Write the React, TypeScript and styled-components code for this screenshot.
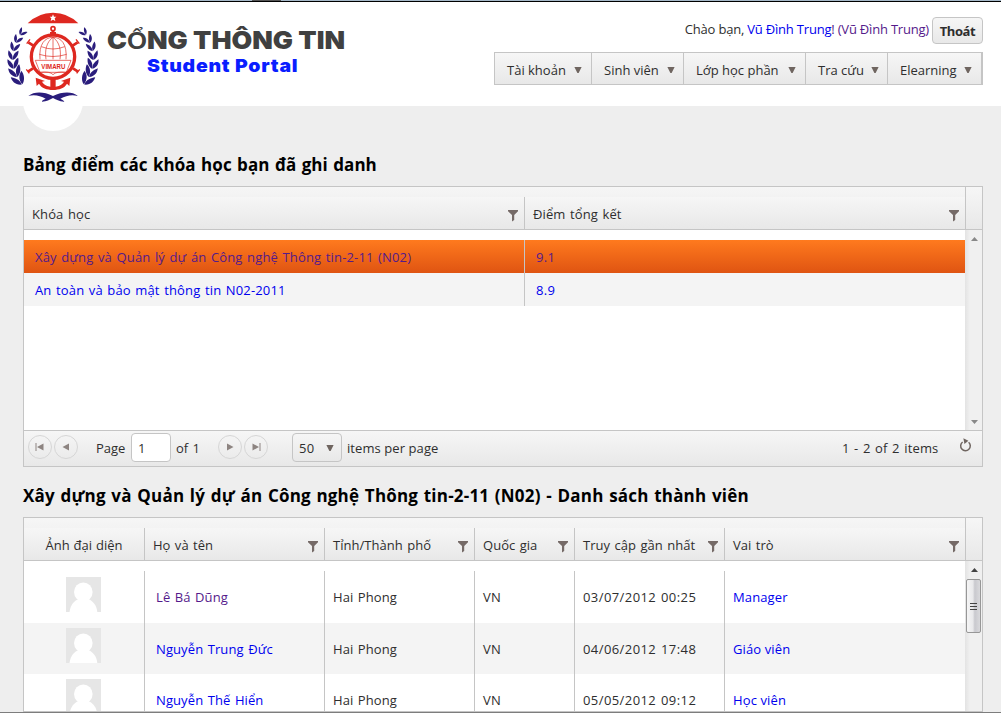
import React from "react";
import styled, { createGlobalStyle } from "styled-components";

const LINE = "#c5c5c5";
const BAR = "linear-gradient(#f6f6f6, #e8e8e8)";

const Global = createGlobalStyle`
  * { box-sizing: border-box; }
  html, body { margin: 0; padding: 0; }
  body {
    width: 1001px; height: 713px; overflow: hidden;
    background: #eeeeee; color: #2e2e2e;
    font: 13px/20px "Open Sans", "Noto Sans", sans-serif;
  }
`;

const Page = styled.div`
  width: 1001px; height: 713px; overflow: hidden;
  display: flex; flex-direction: column;
`;
const Strip = styled.div`
  height: 2px; flex: none; border-bottom: 1px solid #000;
  background: linear-gradient(90deg, #a5b8c8 252px, #555 252px, #555 281px, #a5b8c8 281px);
`;
const Header = styled.header`
  height: 104px; flex: none; background: #fff; position: relative;
  display: flex; justify-content: space-between; padding: 6px 18px 0 4px;
`;
const Bump = styled.div`
  position: absolute; left: 23px; top: 69px; width: 60px; height: 60px;
  border-radius: 50%; background: #fff;
`;
const Brand = styled.div`display: flex; position: relative;`;
const Titles = styled.div`
  margin-left: 3px; padding-top: 17px;
  font-family: Inter, sans-serif; font-weight: 900;
`;
const Title = styled.div`
  width: max-content; font-size: 25px; line-height: 30px; color: #404040; white-space: nowrap;
  transform: scaleX(1.07); transform-origin: left;
`;
const Regular = styled.span`
  font: 700 24px/20px "Liberation Sans", sans-serif;
`;
const Subtitle = styled.div`
  width: max-content; margin-left: 40px; font-size: 18px; line-height: 22px; color: #0a1eff;
  white-space: nowrap; letter-spacing: 0.7px; transform: scaleX(1.08); transform-origin: left;
`;
const Side = styled.div`display: flex; flex-direction: column; align-items: flex-end;`;
const Greeting = styled.div`display: flex; height: 36px; padding-top: 9px;`;
const Text = styled.span<{ $ls?: number; $ws?: number; $c?: string }>`
  white-space: pre; letter-spacing: ${(p) => p.$ls ?? 0}px; word-spacing: ${(p) => p.$ws ?? 0}px;
  color: ${(p) => p.$c ?? "inherit"};
`;
const Hello = styled.div`margin: 2px 3px 0 0; white-space: pre;`;
const Logout = styled.button`
  width: 51px; height: 27px; padding: 0; border: 1px solid ${LINE}; border-radius: 4px;
  background: ${BAR}; color: #2e2e2e; font: bold 13px/27px "Open Sans", sans-serif; letter-spacing: -0.4px;
`;
const Nav = styled.nav`
  display: flex; height: 33px; margin-top: 8px; border: 1px solid ${LINE}; background: ${BAR};
`;
const NavItem = styled.div<{ $w: number; $r: number }>`
  width: ${(p) => p.$w}px; border-right: 1px solid ${LINE};
  display: flex; align-items: center; justify-content: space-between; padding: 3px ${(p) => p.$r}px 0 12px;
`;
const Heading = styled.h2<{ $h: number; $ls: number }>`
  margin: 0; height: ${(p) => p.$h}px; flex: none; display: flex; align-items: flex-end;
  padding: 0 0 9px 23px; font-size: 17px; line-height: 24px; font-weight: 700; color: #000;
  white-space: pre; letter-spacing: ${(p) => p.$ls}px; word-spacing: 1px;
`;
const Grid = styled.section<{ $h: number }>`
  width: 960px; height: ${(p) => p.$h}px; margin-left: 23px; flex: none; overflow: hidden;
  border: 1px solid ${LINE}; background: #fff; display: flex; flex-direction: column;
`;
const HeadBar = styled.div`
  height: 43px; flex: none; display: flex; border-bottom: 1px solid ${LINE}; background: ${BAR};
`;
const HeadRow = styled.div`
  width: 941px; height: 32px; margin-top: 10px; display: flex; background: ${BAR};
`;
const HeadGap = styled.div`width: 1px; background: ${LINE};`;
const HeadCell = styled.div<{ $w: number; $last?: boolean; $center?: boolean }>`
  width: ${(p) => p.$w}px; padding: 2px 5px 0 ${(p) => (p.$center ? 5 : 8)}px;
  border-right: ${(p) => (p.$last ? "0" : `1px solid ${LINE}`)};
  display: flex; align-items: center; justify-content: ${(p) => (p.$center ? "center" : "space-between")};
`;
const FunnelIcon = styled.svg`margin-top: 4px;`;
const Body = styled.div`flex: 1; min-height: 0; display: flex;`;
const Rows = styled.div`width: 941px; padding-top: 10px; display: flex; flex-direction: column;`;
const Row = styled.div<{ $h: number; $kind?: "on" | "alt" }>`
  height: ${(p) => p.$h}px; flex: none; display: flex;
  background: ${(p) =>
    p.$kind === "on" ? "linear-gradient(#ff7a1e, #df5412)" : p.$kind === "alt" ? "#f4f4f4" : "#fff"};
`;
const Cell = styled.div<{ $w: number; $last?: boolean; $pad?: number; $top?: number }>`
  width: ${(p) => p.$w}px; padding: ${(p) => p.$top ?? 1}px 0 0 ${(p) => p.$pad ?? 8}px;
  border-right: ${(p) => (p.$last ? "0" : `1px solid ${LINE}`)};
  display: flex; align-items: center;
`;
const PhotoCell = styled.div<{ $top: number }>`
  width: 121px; padding: ${(p) => p.$top}px 0 0 42px; border-right: 1px solid ${LINE};
`;
const Scroll = styled.div`
  width: 17px; background: linear-gradient(90deg, #e3e3e3, #f0f0f0 5px, #f0f0f0);
  display: flex; flex-direction: column; align-items: center; justify-content: space-between; padding: 7px 0 6px;
`;
const ArrowIcon = styled.svg`margin-left: 2px; flex: none;`;
const Thumb = styled.div`
  width: 15px; height: 54px; margin: 7px 0 auto; border: 1px solid #979797; border-radius: 2px;
  background: linear-gradient(90deg, #f5f5f5, #e9e9eb 45%, #c9c9ce 60%, #d9d9dc);
  display: flex; flex: none; flex-direction: column; gap: 2px; align-items: center; justify-content: center;
`;
const Grip = styled.i`width: 7px; height: 1px; background: #444;`;
const Pager = styled.div`
  height: 36px; flex: none; border-top: 1px solid ${LINE}; background: ${BAR};
  display: flex; padding: 2px 10px 0 4px;
`;
const Round = styled.div<{ $gap?: number }>`
  width: 24px; height: 24px; margin: 2px ${(p) => p.$gap ?? 2}px 0 0; border: 1px solid #d6d6d6;
  border-radius: 50%; display: flex; align-items: center; justify-content: center;
`;
const Label = styled.div<{ $w: number }>`width: ${(p) => p.$w}px; padding-top: 5px; white-space: nowrap;`;
const Box = styled.div<{ $w: number; $fill?: string }>`
  width: ${(p) => p.$w}px; height: 29px; padding: 0 7px 0 6px; border: 1px solid ${LINE}; border-radius: 4px;
  background: ${(p) => p.$fill ?? BAR}; display: flex; align-items: center; justify-content: space-between;
  margin-right: 5px;
`;
const Push = styled.div`flex: 1;`;
const Bottom = styled.div`height: 1px; flex: none; background: #7d7d7d;`;

const Down = () => (
  <svg width="8" height="8" viewBox="0 0 8 8"><path d="M0.4 1h7.2L4.6 7h-1.2z" fill="#6f6560" /></svg>
);
const Funnel = () => (
  <FunnelIcon width="12" height="14" viewBox="0 0 12 14">
    <path d="M1 1h10v1.2L7.2 6v5L5 12.4V6L1 2.2z" fill="#756a67" />
  </FunnelIcon>
);
const ScrollArrow = ({ down, dark }: { down?: boolean; dark?: boolean }) => (
  <ArrowIcon width="7" height="4" viewBox="0 0 7 4">
    <path d={down ? "M0 0h7L3.5 4z" : "M0 4h7L3.5 0z"} fill={dark ? "#444" : "#888"} />
  </ArrowIcon>
);
const Step = ({ d }: { d: string }) => (
  <svg width="10" height="10" viewBox="0 0 10 10"><path d={d} fill="#8d8481" /></svg>
);
const Avatar = () => (
  <svg width="35" height="35" viewBox="0 0 35 35" display="block">
    <rect width="35" height="35" fill="#e6e6e6" />
    <ellipse cx="17.3" cy="15" rx="9.3" ry="9.6" fill="#fff" />
    <path d="M3.5 35C4.5 27 9 23.5 12.5 22h9.8C27 24 30.5 28 31.3 35z" fill="#fff" />
  </svg>
);

const leafAngles = [-40, -28, -16, -4, 8, 20, 32];
const Laurel = () => (
  <g fill="#2a1d7c">
    {leafAngles.map((a, i) => (
      <g key={a} transform={`rotate(${-a} 147 150) translate(27 150) scale(${0.75 + i * 0.09})`}>
        <path d="M-1 14C-14 8-17-4-14-14C-7-7 1 0-1 14z" />
        <path d="M0 14C-2-1 6-10 15-14C16-3 11 9 0 14z" />
      </g>
    ))}
  </g>
);
const Logo = () => (
  <svg width="100" height="98" viewBox="0 0 300 294">
    <path d="M71 46Q102 14 147 14T223 46z" fill="#de2820" />
    <path d="M147 19l3 7h7l-5 5 2 8-7-4-7 4 2-8-5-5h7z" fill="#fff" />
    <Laurel />
    <g transform="translate(294 0) scale(-1 1)"><Laurel /></g>
    <path d="M73 264C91 250 119 251 147 264C175 251 204 250 222 264C202 259 187 263 169 272C177 276 183 280 180 281C165 280 157 275 147 270C137 275 128 281 114 281C112 278 119 275 125 272C109 263 91 259 73 264z" fill="#2a1d7c" />
    <g fill="none" stroke="#de2820">
      <circle cx="147" cy="146" r="65" strokeWidth="10" />
      <circle cx="147" cy="62" r="6" strokeWidth="5" />
      <path d="M138 76h18M147 68v12M88 113l-15-10M206 113l15-10M87 181l-15 10M207 181l15 10" strokeWidth="8" />
      <path d="M68 107l10-13M226 107l-10-13M67 184l9 12M227 184l-9 12" strokeWidth="4" />
      <path d="M108 154C104 109 122 88 147 88S190 109 186 154M147 88v66M147 88C127 102 122 128 126 154M147 88C167 102 172 128 168 154M112 116Q147 130 182 116M106 139Q147 152 188 139" strokeWidth="2" />
      <path d="M94 157H201L187 193H108zM108 193Q138 189 147 200Q157 189 187 193" strokeWidth="2" />
    </g>
    <path d="M139 211h16v25c14-2 22-9 25-15l-9-2 28-10-3 25-7-7c-8 14-23 18-42 19-19-1-34-5-42-19l-7 7-3-25 28 10-9 2c3 6 11 13 25 15z" fill="#de2820" />
    <text x="148" y="183" textAnchor="middle" textLength="72" lengthAdjust="spacingAndGlyphs"
      fontFamily="Liberation Sans, sans-serif" fontWeight="700" fontSize="21" fill="#de2820">VIMARU</text>
  </svg>
);

const BLUE = "#0000ee";
const VISITED = "#551a8b";

const menu: [string, number, number][] = [
  ["Tài khoản", 97, 9], ["Sinh viên", 92, 8], ["Lớp học phần", 122, 9], ["Tra cứu", 82, 8], ["Elearning", 94, 9],
];
const courses = [
  { name: "Xây dựng và Quản lý dự án Công nghệ Thông tin-2-11 (N02)", score: "9.1", on: true },
  { name: "An toàn và bảo mật thông tin N02-2011", score: "8.9", on: false },
];
const memberHead: [string, number][] = [
  ["Họ và tên", 180], ["Tỉnh/Thành phố", 150], ["Quốc gia", 100], ["Truy cập gần nhất", 150], ["Vai trò", 240],
];
const members = [
  { name: "Lê Bá Dũng", seen: "03/07/2012 00:25", role: "Manager", h: 52, visited: true },
  { name: "Nguyễn Trung Đức", seen: "04/06/2012 17:48", role: "Giáo viên", h: 51, visited: false },
  { name: "Nguyễn Thế Hiển", seen: "05/05/2012 09:12", role: "Học viên", h: 51, visited: false },
];

export default function App() {
  return (
    <Page>
      <Global />
      <Strip />
      <Header>
        <Bump />
        <Brand>
          <Logo />
          <Titles>
            <Title>C<Regular>Ổ</Regular>NG THÔNG TIN</Title>
            <Subtitle>Student Portal</Subtitle>
          </Titles>
        </Brand>
        <Side>
          <Greeting>
            <Hello>
              <Text $ls={-0.2}>Chào bạn, </Text><Text $ls={-0.2} $c={BLUE}>Vũ Đình Trung</Text>
              <Text $ls={-0.2} $c={VISITED}>! (Vũ Đình Trung)</Text>
            </Hello>
            <Logout>Thoát</Logout>
          </Greeting>
          <Nav>
            {menu.map(([t, w, r]) => (
              <NavItem key={t} $w={w} $r={r}><Text>{t}</Text><Down /></NavItem>
            ))}
          </Nav>
        </Side>
      </Header>

      <Heading $h={80} $ls={0.04}>Bảng điểm các khóa học bạn đã ghi danh</Heading>
      <Grid $h={281}>
        <HeadBar>
          <HeadRow>
            <HeadCell $w={501}><Text $ls={0.12} $ws={1}>Khóa học</Text><Funnel /></HeadCell>
            <HeadCell $w={440} $last><Text $ls={0.12} $ws={1}>Điểm tổng kết</Text><Funnel /></HeadCell>
          </HeadRow>
          <HeadGap />
        </HeadBar>
        <Body>
          <Rows>
            {courses.map((c) => (
              <Row key={c.name} $h={33} $kind={c.on ? "on" : "alt"}>
                <Cell $w={501} $pad={11}><Text $ls={0.15} $ws={1} $c={c.on ? VISITED : BLUE}>{c.name}</Text></Cell>
                <Cell $w={440} $pad={11} $last><Text $ls={0.3} $c={c.on ? VISITED : BLUE}>{c.score}</Text></Cell>
              </Row>
            ))}
          </Rows>
          <Scroll><ScrollArrow /><ScrollArrow down /></Scroll>
        </Body>
        <Pager>
          <Round><Step d="M0.5 1h1v8h-1zM8.5 1.5v7L2 5z" /></Round>
          <Round $gap={18}><Step d="M8 1.5v7L1.5 5z" /></Round>
          <Label $w={35}><Text>Page</Text></Label>
          <Box $w={40} $fill="#fff"><Text>1</Text></Box>
          <Label $w={42}><Text $ws={1}>of 1</Text></Label>
          <Round><Step d="M2 1.5v7L8.5 5z" /></Round>
          <Round $gap={24}><Step d="M1.5 1.5v7L8 5zM8.5 1h1v8h-1z" /></Round>
          <Box $w={50}><Text $ls={0.4}>50</Text><Down /></Box>
          <Label $w={100}><Text $ls={0.08}>items per page</Text></Label>
          <Push />
          <Label $w={117}><Text $ls={0.15} $ws={1}>1 - 2 of 2 items</Text></Label>
          <svg width="13" height="24" viewBox="0 0 13 24">
            <path d="M3.6 9A4.8 4.8 0 1 0 9.6 9.2" fill="none" stroke="#6f6560" strokeWidth="1.5" />
            <path d="M4.4 5.2l5 2.6-4 3.2z" fill="#6f6560" />
          </svg>
        </Pager>
      </Grid>

      <Heading $h={50} $ls={0.2}>Xây dựng và Quản lý dự án Công nghệ Thông tin-2-11 (N02) - Danh sách thành viên</Heading>
      <Grid $h={195}>
        <HeadBar>
          <HeadRow>
            <HeadCell $w={121} $center><Text $ws={0.5}>Ảnh đại diện</Text></HeadCell>
            {memberHead.map(([t, w], i) => (
              <HeadCell key={t} $w={w} $last={i === 4}><Text $ws={1} $ls={0.03}>{t}</Text><Funnel /></HeadCell>
            ))}
          </HeadRow>
          <HeadGap />
        </HeadBar>
        <Body>
          <Rows>
            {members.map((m, i) => {
              const top = i === 0 ? 0 : 1;
              return (
                <Row key={m.name} $h={m.h} $kind={i === 1 ? "alt" : undefined}>
                  <PhotoCell $top={i === 0 ? 6 : 5}><Avatar /></PhotoCell>
                  <Cell $w={180} $pad={11} $top={top}>
                    <Text $ls={0.1} $ws={1} $c={m.visited ? VISITED : BLUE}>{m.name}</Text>
                  </Cell>
                  <Cell $w={150} $top={top}><Text $ls={0.1} $ws={1}>Hai Phong</Text></Cell>
                  <Cell $w={100} $top={top}><Text $ls={0.3}>VN</Text></Cell>
                  <Cell $w={150} $top={top}><Text $ls={0.42} $ws={1}>{m.seen}</Text></Cell>
                  <Cell $w={240} $last $top={top}><Text $ls={0.12} $c={BLUE}>{m.role}</Text></Cell>
                </Row>
              );
            })}
          </Rows>
          <Scroll><ScrollArrow dark /><Thumb><Grip /><Grip /><Grip /></Thumb></Scroll>
        </Body>
      </Grid>
      <Bottom />
    </Page>
  );
}
